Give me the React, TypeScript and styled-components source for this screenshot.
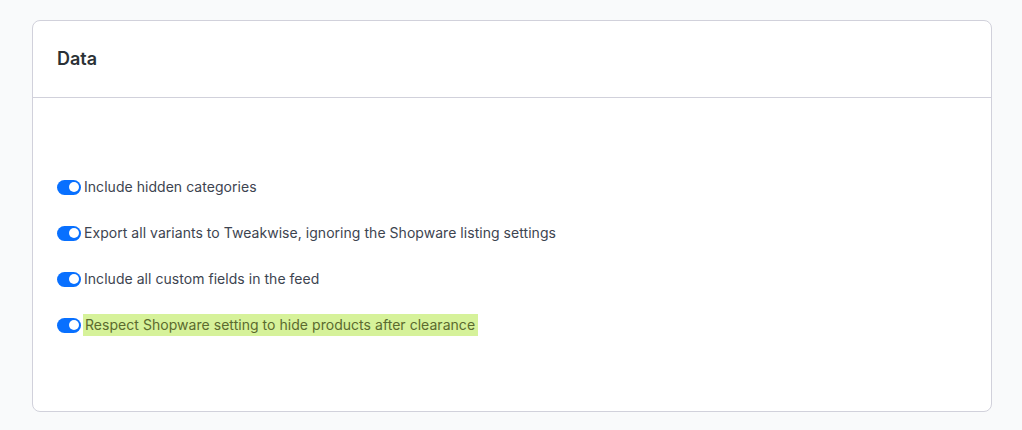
import React from 'react';
import styled, { createGlobalStyle } from 'styled-components';

const GlobalStyle = createGlobalStyle`
   html, body {
      margin: 0;
      padding: 0;
      background: #f9fafb;
      font-family: Inter, "Noto Sans", sans-serif;
   }
`;

const Page = styled.div`
   width: 1022px;
   height: 430px;
   padding: 20px 30px 18px 32px;
   box-sizing: border-box;
`;

const Card = styled.section`
   height: 392px;
   background: #ffffff;
   border: 1px solid #d1d1db;
   border-radius: 8px;
   box-sizing: border-box;
   display: flex;
   flex-direction: column;
`;

const CardHeader = styled.header`
   height: 76px;
   flex-shrink: 0;
   display: flex;
   align-items: center;
   padding: 0 24px;
   border-bottom: 1px solid #d1d1db;

   h2 {
      margin: 0;
      font-size: 18px;
      font-weight: 600;
      color: #2b3136;
      padding-bottom: 1px;
   }
`;

const CardBody = styled.div`
   padding: 78px 24px 0;
   display: flex;
   flex-direction: column;
   gap: 24px;
`;

const Row = styled.label`
   display: flex;
   align-items: center;
   gap: 2px;
   height: 22px;
`;

const Switch = styled.span<{ $on: boolean }>`
   position: relative;
   width: 24px;
   height: 15px;
   border-radius: 8px;
   background: ${(p) => (p.$on ? '#0870ff' : '#d1d9e0')};
   flex-shrink: 0;

   &::after {
      content: '';
      position: absolute;
      top: 2.5px;
      left: ${(p) => (p.$on ? '11.5px' : '2.5px')};
      width: 10px;
      height: 10px;
      border-radius: 50%;
      background: #ffffff;
   }
`;

const Label = styled.span<{ $highlight?: boolean }>`
   font-size: 14px;
   letter-spacing: 0.04px;
   line-height: 22px;
   color: ${(p) => (p.$highlight ? '#5b6a2e' : '#3d4450')};
   background: ${(p) => (p.$highlight ? '#d6f29a' : 'transparent')};
   padding: ${(p) => (p.$highlight ? '0 3px 0 2px' : '0 0 0 1px')};
`;

const options = [
   { label: 'Include hidden categories' },
   { label: 'Export all variants to Tweakwise, ignoring the Shopware listing settings' },
   { label: 'Include all custom fields in the feed' },
   { label: 'Respect Shopware setting to hide products after clearance', highlight: true },
];

export default function App(): JSX.Element {
   return (
      <>
         <GlobalStyle />
         <Page>
            <Card>
               <CardHeader>
                  <h2>Data</h2>
               </CardHeader>
               <CardBody>
                  {options.map((o) => (
                     <Row key={o.label}>
                        <Switch $on />
                        <Label $highlight={o.highlight}>{o.label}</Label>
                     </Row>
                  ))}
               </CardBody>
            </Card>
         </Page>
      </>
   );
}
